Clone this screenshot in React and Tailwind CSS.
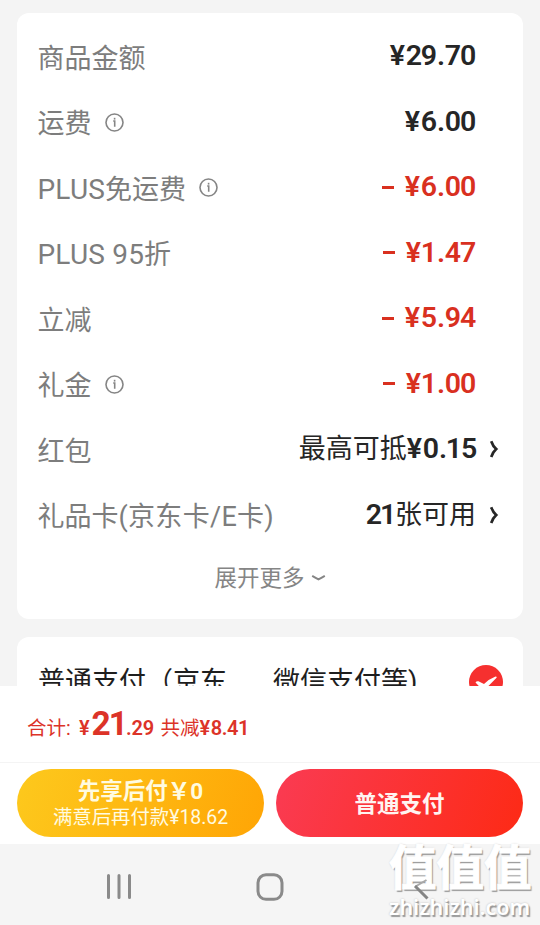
const rows = [
  { label: '商品金额', value: '29.70' },
  { label: '运费', info: true, value: '6.00' },
  { latin: 'PLUS', label: '免运费', info: true, value: '6.00', minus: true },
  { latin: 'PLUS 95', label: '折', value: '1.47', minus: true },
  { label: '立减', value: '5.94', minus: true },
  { label: '礼金', info: true, value: '1.00', minus: true },
];

function Info() {
  return (
    <svg className="relative -top-px ml-[13px]" width="19" height="19" viewBox="0 0 19 19" fill="none" stroke="#858585" strokeWidth="1.6">
      <circle cx="9.5" cy="9.5" r="8.5" />
      <path d="M8.2 8h1.5v5.8" />
      <path d="M9.6 4.8v1.8" />
    </svg>
  );
}

function Label({ latin, children }) {
  return (
    <span className="relative top-px -ml-[0.5px] whitespace-pre text-[27px] leading-[36px] text-[#7d7d7d]">
      {latin && <span className="text-[28px] tracking-[0.2px]">{latin}</span>}
      {children}
    </span>
  );
}

function Arrow() {
  return (
    <svg className="ml-[13px]" width="10" height="20" viewBox="0 0 10 20" fill="none" stroke="#262626" strokeWidth="2.7">
      <path d="M2.2 2.2Q4 7.3 7.2 10.1Q4 13 2.2 18" />
    </svg>
  );
}

const spacing = { '.': 'px-[1px]', '1': '-ml-[1px]' };

// Price digits with the tight "1" and the roomy decimal point of a DIN face.
function Digits({ value, yen = true }) {
  return (
    <span className="inline-flex text-[28.5px] font-semibold leading-[36px] tracking-[-1.2px]">
      {yen && <span className="mr-[2px]">¥</span>}
      {value.split('').map((c, i) => (
        <span key={i} className={spacing[c] || ''}>{c}</span>
      ))}
    </span>
  );
}

function Amount({ row }) {
  return (
    <span className={`relative -top-[1.5px] flex items-center ${row.minus ? 'text-[#d9301f]' : 'text-[#262626]'}`}>
      {row.minus && <span className="mr-[11px] h-[3px] w-[12px] bg-[#d9301f]" />}
      <Digits value={row.value} />
    </span>
  );
}

export default function App() {
  return (
    <div className="relative flex h-[925px] w-[540px] flex-col overflow-hidden bg-[#f4f4f4] font-['Roboto','Noto_Sans_CJK_SC',sans-serif]">
      <div className="h-[686px] shrink-0 overflow-hidden px-[17px] pt-[13px]">
        <section className="h-[606px] rounded-[12px] bg-white pl-[21px] pt-[12px]">
          {rows.map((row) => (
            <div key={row.label} className="flex h-[65.5px] items-center justify-between pr-[48px]">
              <div className="flex items-center">
                <Label latin={row.latin}>{row.label}</Label>
                {row.info && <Info />}
              </div>
              <Amount row={row} />
            </div>
          ))}
          <div className="flex h-[65.5px] items-center justify-between pr-[24px]">
            <Label>红包</Label>
            <div className="relative -top-[1.5px] flex items-center text-[27px] leading-[36px] text-[#262626]">
              最高可抵<Digits value="0.15" />
              <Arrow />
            </div>
          </div>
          <div className="flex h-[65.5px] items-center justify-between pr-[24px]">
            <Label>礼品卡<span className="tracking-[0.3px]">(京东卡/E卡)</span></Label>
            <div className="relative -top-[1.5px] flex items-center text-[27px] leading-[36px] text-[#262626]">
              <Digits value="21" yen={false} />张可用
              <Arrow />
            </div>
          </div>
          <div className="flex h-[60px] items-center justify-center pr-[21px] text-[22.5px] text-[#858585]">
            展开更多
            <svg className="relative -top-[1px] ml-[6px]" width="15" height="8" viewBox="0 0 15 8" fill="none" stroke="#858585" strokeWidth="2">
              <path d="M1.2 1.8Q5 4 7.5 5.3Q10 4 13.8 1.8" />
            </svg>
          </div>
        </section>
        <section className="mt-[18px] flex h-[91px] items-center justify-between rounded-[12px] bg-white pl-[21px] pr-[20px] text-[27px] text-[#1e1e1e]">
          <div className="flex">
            <span className="w-[235px] whitespace-nowrap">普通支付（京东</span>
            <span className="whitespace-nowrap">微信支付等)</span>
          </div>
          <svg className="mb-[1px]" width="34" height="34" viewBox="0 0 34 34">
            <circle cx="17" cy="17" r="17" fill="#f6302f" />
            <path d="M6.5 17.5Q7.5 15.8 9.5 16.3L15 19Q20 14 26.5 11.5Q28.5 11.5 27.3 13L16 24.5Q14.5 25.5 13 24.3Z" fill="#fff" />
          </svg>
        </section>
      </div>

      <div className="flex h-[76px] shrink-0 items-center bg-white pl-[27px] text-[#dc3328]">
        <div className="flex items-baseline whitespace-nowrap text-[19.5px]">
          <span className="w-[52px]">合计:</span>
          <span className="w-[12.5px] text-[20px] font-semibold">¥</span>
          <span className="text-[33.5px] font-bold leading-[40px] tracking-[-2px]">21</span>
          <span className="w-[34.5px] text-[20px] font-semibold tracking-[-0.2px]">.29</span>
          共减<span className="inline-flex text-[20px] font-semibold tracking-[-0.4px]"><span className="mr-px">¥</span>8.41</span>
        </div>
      </div>

      <div className="flex h-[82px] shrink-0 gap-[12px] border-t border-[#f4f4f4] bg-white px-[17px] pt-[6px]">
        <button className="flex h-[68px] w-[247px] flex-col items-center justify-center rounded-full bg-linear-[110deg] from-[#fdc91d] to-[#ffa505] pt-[2px] text-[#fffbe0]">
          <span className="whitespace-nowrap text-[22.5px] font-bold leading-[27px]">先享后付￥0</span>
          <span className="whitespace-nowrap text-[19.4px] leading-[25px]">满意后再付款¥18.62</span>
        </button>
        <button className="flex h-[68px] w-[247px] items-center justify-center rounded-full bg-linear-[110deg] from-[#fa3b53] to-[#fd2a15] pt-[3px] text-[22.5px] font-bold text-[#fff4f1]">
          普通支付
        </button>
      </div>

      <nav className="flex h-[81px] shrink-0 items-start bg-[#f5f5f5] pl-[106px] pt-[29px]">
        <svg width="26" height="28" viewBox="0 0 26 28" stroke="#8a8a8a" strokeWidth="3" strokeLinecap="round">
          <path d="M2.5 2.5v22M13 2.5v22M23.5 2.5v22" />
        </svg>
        <svg className="ml-[124px]" width="28" height="28" viewBox="0 0 28 28" fill="none" stroke="#8a8a8a" strokeWidth="3">
          <rect x="2" y="1.8" width="24" height="24.5" rx="8" />
        </svg>
        <svg className="relative z-10 ml-[129px]" width="18" height="28" viewBox="0 0 18 28" fill="none">
          <path d="M13.5 7L2.5 13.5" stroke="#a8a8a8" strokeWidth="2" />
          <path d="M2 13L14.5 25.5" stroke="#858585" strokeWidth="3" />
        </svg>
      </nav>

      <div className="absolute left-[389px] top-[843px] flex w-[146px] flex-col font-['Noto_Sans','Noto_Sans_CJK_SC',sans-serif] font-bold text-white [text-shadow:1.5px_1.5px_1px_#999,0_0_2px_#bbb]">
        <span className="whitespace-nowrap text-[47.5px] leading-[48px] [-webkit-text-stroke:1px_white]">值值值</span>
        <span className="whitespace-nowrap text-[21.5px] font-semibold leading-[31px]">zhizhizhi.com</span>
      </div>
    </div>
  );
}
